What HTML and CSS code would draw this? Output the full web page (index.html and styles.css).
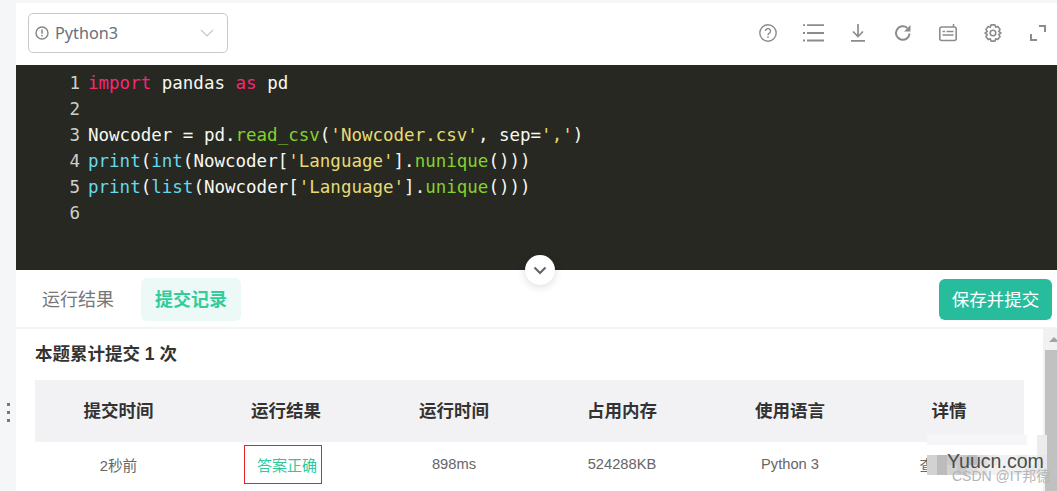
FILE: index.html
```html
<!DOCTYPE html>
<html lang="zh">
<head>
<meta charset="utf-8">
<title>Python3</title>
<link rel="stylesheet" href="styles.css">
</head>
<body>
<div class="page">
  <aside class="side"><span class="grip"><i></i><i></i><i></i></span></aside>
  <main class="main">
    <header class="toolbar">
      <div class="select">
        <svg class="info" viewBox="0 0 14 14" width="14" height="14"><circle cx="7" cy="7" r="6" fill="none" stroke="#858585" stroke-width="1.400"/><path d="M7 3.400v4.400M7 9v1.600" stroke="#858585" stroke-width="1.500" fill="none"/></svg>
        <span class="lang">Python3</span>
        <svg class="caret" viewBox="0 0 14 8" width="14" height="8"><path d="M1 1l6 6 6-6" fill="none" stroke="#c4c8d0" stroke-width="1.200"/></svg>
      </div>
      <div class="tools">
        <span class="tool"><svg viewBox="0 0 18 18" width="18" height="18"><circle cx="9" cy="9" r="8.200" fill="none" stroke="#8c8c8c" stroke-width="1.400"/><path d="M6.500 7a2.500 2.500 0 1 1 3.800 2.200C9.400 9.800 9 10.300 9 11.300" fill="none" stroke="#8c8c8c" stroke-width="1.400"/><path d="M9 12.400v1.700" stroke="#8c8c8c" stroke-width="1.500"/></svg></span>
        <span class="tool"><svg viewBox="0 0 21 18" width="21" height="18"><path d="M0 1.200h2M0 9h2M0 16.500h2M4 1.200h17M4 9h17M4 16.500h17" stroke="#8c8c8c" stroke-width="1.800" fill="none"/></svg></span>
        <span class="tool"><svg viewBox="0 0 14 18" width="14" height="18"><path d="M7 0v12.500M2 7.500l5 5 5-5M0 16.800h14" fill="none" stroke="#8c8c8c" stroke-width="1.700"/></svg></span>
        <span class="tool"><svg viewBox="0 0 18 18" width="18" height="18"><path d="M15.600 9.500a6.800 6.800 0 1 1-2.300-5.600" fill="none" stroke="#8c8c8c" stroke-width="2"/><path d="M16.500 1v6.500h-6.500z" fill="#8c8c8c"/></svg></span>
        <span class="tool"><svg viewBox="0 0 18 18" width="18" height="18"><rect x=".8" y="3" width="16.400" height="13.500" rx="2" fill="none" stroke="#8c8c8c" stroke-width="1.600"/><path d="M14.500 0v3M3.500 7.500h2.500M7.500 7.500h7M3.500 11h11" stroke="#8c8c8c" stroke-width="1.500" fill="none"/></svg></span>
        <span class="tool"><svg viewBox="0 0 18 18" width="18" height="18"><path d="M7 .9h4l.7 2.300 2.100-.8 2.300 3-1.400 2L16.900 9l-2.200 1.600 1.400 2-2.300 3-2.100-.8L11 17.100H7l-.7-2.300-2.100.8-2.300-3 1.400-2L1.100 9l2.200-1.600-1.400-2 2.300-3 2.100.8z" fill="none" stroke="#8c8c8c" stroke-width="1.600" stroke-linejoin="round"/><circle cx="9" cy="9" r="2.800" fill="none" stroke="#8c8c8c" stroke-width="1.600"/></svg></span>
        <span class="tool"><svg viewBox="0 0 16 16" width="16" height="16"><path d="M9 1h6v6M1 9v6h6" fill="none" stroke="#8c8c8c" stroke-width="2"/></svg></span>
      </div>
    </header>

    <section class="editor">
      <div class="line"><span class="num">1</span><code><b class="kw">import</b> pandas <b class="kw">as</b> pd</code></div>
      <div class="line"><span class="num">2</span><code></code></div>
      <div class="line"><span class="num">3</span><code>Nowcoder = pd.<b class="fn">read_csv</b>(<b class="str">'Nowcoder.csv'</b>, sep=<b class="str">','</b>)</code></div>
      <div class="line"><span class="num">4</span><code><b class="bi">print</b>(<b class="bi">int</b>(Nowcoder[<b class="str">'Language'</b>].<b class="fn">nunique</b>()))</code></div>
      <div class="line"><span class="num">5</span><code><b class="bi">print</b>(<b class="bi">list</b>(Nowcoder[<b class="str">'Language'</b>].<b class="fn">unique</b>()))</code></div>
      <div class="line"><span class="num">6</span><code></code></div>
      <button class="fold" type="button"><svg viewBox="0 0 14 9" width="14" height="9"><path d="M1.500 1.500L7 7l5.500-5.500" fill="none" stroke="#666" stroke-width="2.200"/></svg></button>
    </section>

    <nav class="tabs">
      <span class="tab">运行结果</span>
      <span class="tab active">提交记录</span>
      <button class="submit" type="button">保存并提交</button>
    </nav>

    <section class="results">
      <div class="content">
        <h2 class="count">本题累计提交 1 次</h2>
        <div class="table">
          <div class="cell head">提交时间</div>
          <div class="cell head">运行结果</div>
          <div class="cell head">运行时间</div>
          <div class="cell head">占用内存</div>
          <div class="cell head">使用语言</div>
          <div class="cell head">详情</div>
          <div class="cell">2秒前</div>
          <div class="cell"><span class="ok">答案正确</span></div>
          <div class="cell">898ms</div>
          <div class="cell">524288KB</div>
          <div class="cell">Python 3</div>
          <div class="cell">查看详情</div>
        </div>
      </div>
      <div class="scrollbar"><span class="arrow"></span><span class="thumb"></span></div>
    </section>
  </main>
</div>

<div class="wm-strip"></div>
<div class="wm-side"></div>
<div class="wm-mosaic">
  <i class="s1"></i><i class="s3"></i><i class="s2"></i><i class="s2"></i><i class="s3"></i><i class="s4"></i><i class="s5"></i><i class="s6"></i><i class="s6"></i><i class="s5"></i><i class="s6"></i><i class="s5"></i>
  <i class="s1"></i><i class="s3"></i><i class="s1"></i><i class="s2"></i><i class="s4"></i><i class="s5"></i><i class="s6"></i><i class="s6"></i><i class="s6"></i><i class="s6"></i><i class="s5"></i><i class="s5"></i>
</div>
<div class="wm-text">Yuucn.com</div>
<div class="wm-sub">CSDN @IT邦德</div>
</body>
</html>
```
FILE: styles.css
```css
* { box-sizing: border-box; }
html, body { margin: 0; height: 491px; overflow: hidden; background: #fff; }
body { font-family: "Liberation Sans", "Noto Sans CJK SC", sans-serif; position: relative; }

.page { display: flex; width: 1057px; height: 491px; }

.side { width: 16px; flex: none; background: #f5f6f8; position: relative; }
.grip { position: absolute; left: 7px; top: 403px; display: flex; flex-direction: column; gap: 5px; }
.grip i { display: block; width: 3px; height: 3px; background: #777; }

.main { flex: 1; min-width: 0; display: flex; flex-direction: column; padding-top: 3px; background: #fff; position: relative; }
.main::before { content: ""; position: absolute; left: 0; right: 0; top: 0; height: 3px; background: #f5f6f8; }

.toolbar { height: 62px; flex: none; display: flex; align-items: center; justify-content: space-between; padding: 0 9px 2px 12px; }
.select { width: 200px; height: 40px; border: 1px solid #c6c8cc; border-radius: 5px; display: flex; align-items: center; padding: 0 13px 0 6px; }
.info { flex: none; }
.lang { margin-left: 6px; flex: 1; font: 16.200px "Noto Sans", "Liberation Sans", sans-serif; color: #6a6f78; }
.tools { display: flex; align-items: center; gap: 25px; }
.tool { width: 20px; height: 20px; display: flex; align-items: center; justify-content: center; }
.tool svg { flex: none; }

.editor { height: 205px; flex: none; background: #272822; padding-top: 5px; position: relative; }
.line { display: flex; height: 26px; font: 17.500px/26px "DejaVu Sans Mono", monospace; color: #f8f8f2; white-space: pre; }
.num { width: 64px; text-align: right; color: #cfd0cc; flex: none; }
.line code { font: inherit; margin-left: 8px; }
.line b { font-weight: 400; }
.kw { color: #f92672; }
.fn { color: #84d22a; }
.str { color: #e6db74; }
.bi { color: #66d9ef; }
.fold { position: absolute; left: 509px; top: 190px; width: 30px; height: 30px; border: 0; padding: 0; border-radius: 50%; background: #fff; box-shadow: 0 2px 8px rgba(0,0,0,.14); display: flex; align-items: center; justify-content: center; z-index: 2; }

.tabs { height: 59px; flex: none; display: flex; align-items: center; border-bottom: 2px solid #f2f3f5; padding: 2px 5px 0 12px; }
.tab { height: 43px; width: 100px; padding-bottom: 4px; display: flex; align-items: center; justify-content: center; font-size: 18px; color: #777; border-radius: 6px; }
.tab.active { margin-left: 13px; padding-bottom: 3px; background: #ecf9f6; color: #33cc99; font-weight: 700; }
.submit { margin-left: auto; width: 113px; height: 41px; border: 0; border-radius: 6px; background: #27bd9c; color: #fff; font: 17.500px "Liberation Sans", "Noto Sans CJK SC", sans-serif; padding: 0 0 3px; }

.results { flex: 1; min-height: 0; display: flex; overflow: hidden; }
.content { flex: 1; min-width: 0; padding: 14px 19px 0 19px; }
.count { margin: 0 0 14px; font-size: 17.500px; line-height: 23px; font-weight: 700; color: #333; }
.table { display: grid; grid-template-columns: 167px repeat(4, 168px) 150px; grid-template-rows: 62px 44px; }
.cell { display: flex; align-items: center; justify-content: center; font-size: 14.700px; color: #666; white-space: nowrap; }
.head { background: #f2f2f5; padding-bottom: 3px; font-size: 17.500px; font-weight: 700; color: #333; }
.ok { display: flex; align-items: center; justify-content: flex-end; width: 78px; height: 39px; margin-right: 6px; padding-right: 4px; border: 1px solid #e8222a; color: #2fc79b; font-size: 15px; }

.scrollbar { width: 14px; flex: none; background: #f1f1f1; padding-left: 2px; display: flex; flex-direction: column; overflow: hidden; }
.arrow { margin: 8px 0 0 4px; width: 0; height: 0; border: 5px solid transparent; border-top: 0; border-bottom: 5px solid #a3a3a3; flex: none; }
.thumb { margin-top: 8px; flex: 1; background: #c1c1c1; }

.wm-strip { position: absolute; left: 927px; top: 435px; width: 100px; height: 10px; background: #f6f6f8; }
.wm-side { position: absolute; left: 1037px; top: 435px; width: 10px; height: 20px; background: #ececec; }
.wm-mosaic { position: absolute; left: 927px; top: 455px; display: grid; grid-template-columns: repeat(12, 10px); grid-auto-rows: 10px; }
.wm-mosaic i { display: block; }
.s1 { background: #d2d2d2; }
.s2 { background: #c9c9c9; }
.s3 { background: #bcbcbc; }
.s4 { background: #dcdcdc; }
.s5 { background: #e8e8e8; }
.s6 { background: #f0f1f2; }
.wm-text { position: absolute; left: 947px; top: 449px; font-size: 19.600px; line-height: 24px; color: #4d4d4d; }
.wm-sub { position: absolute; left: 952px; top: 468px; font-size: 14px; line-height: 16px; color: #b5b5b5; }
```
